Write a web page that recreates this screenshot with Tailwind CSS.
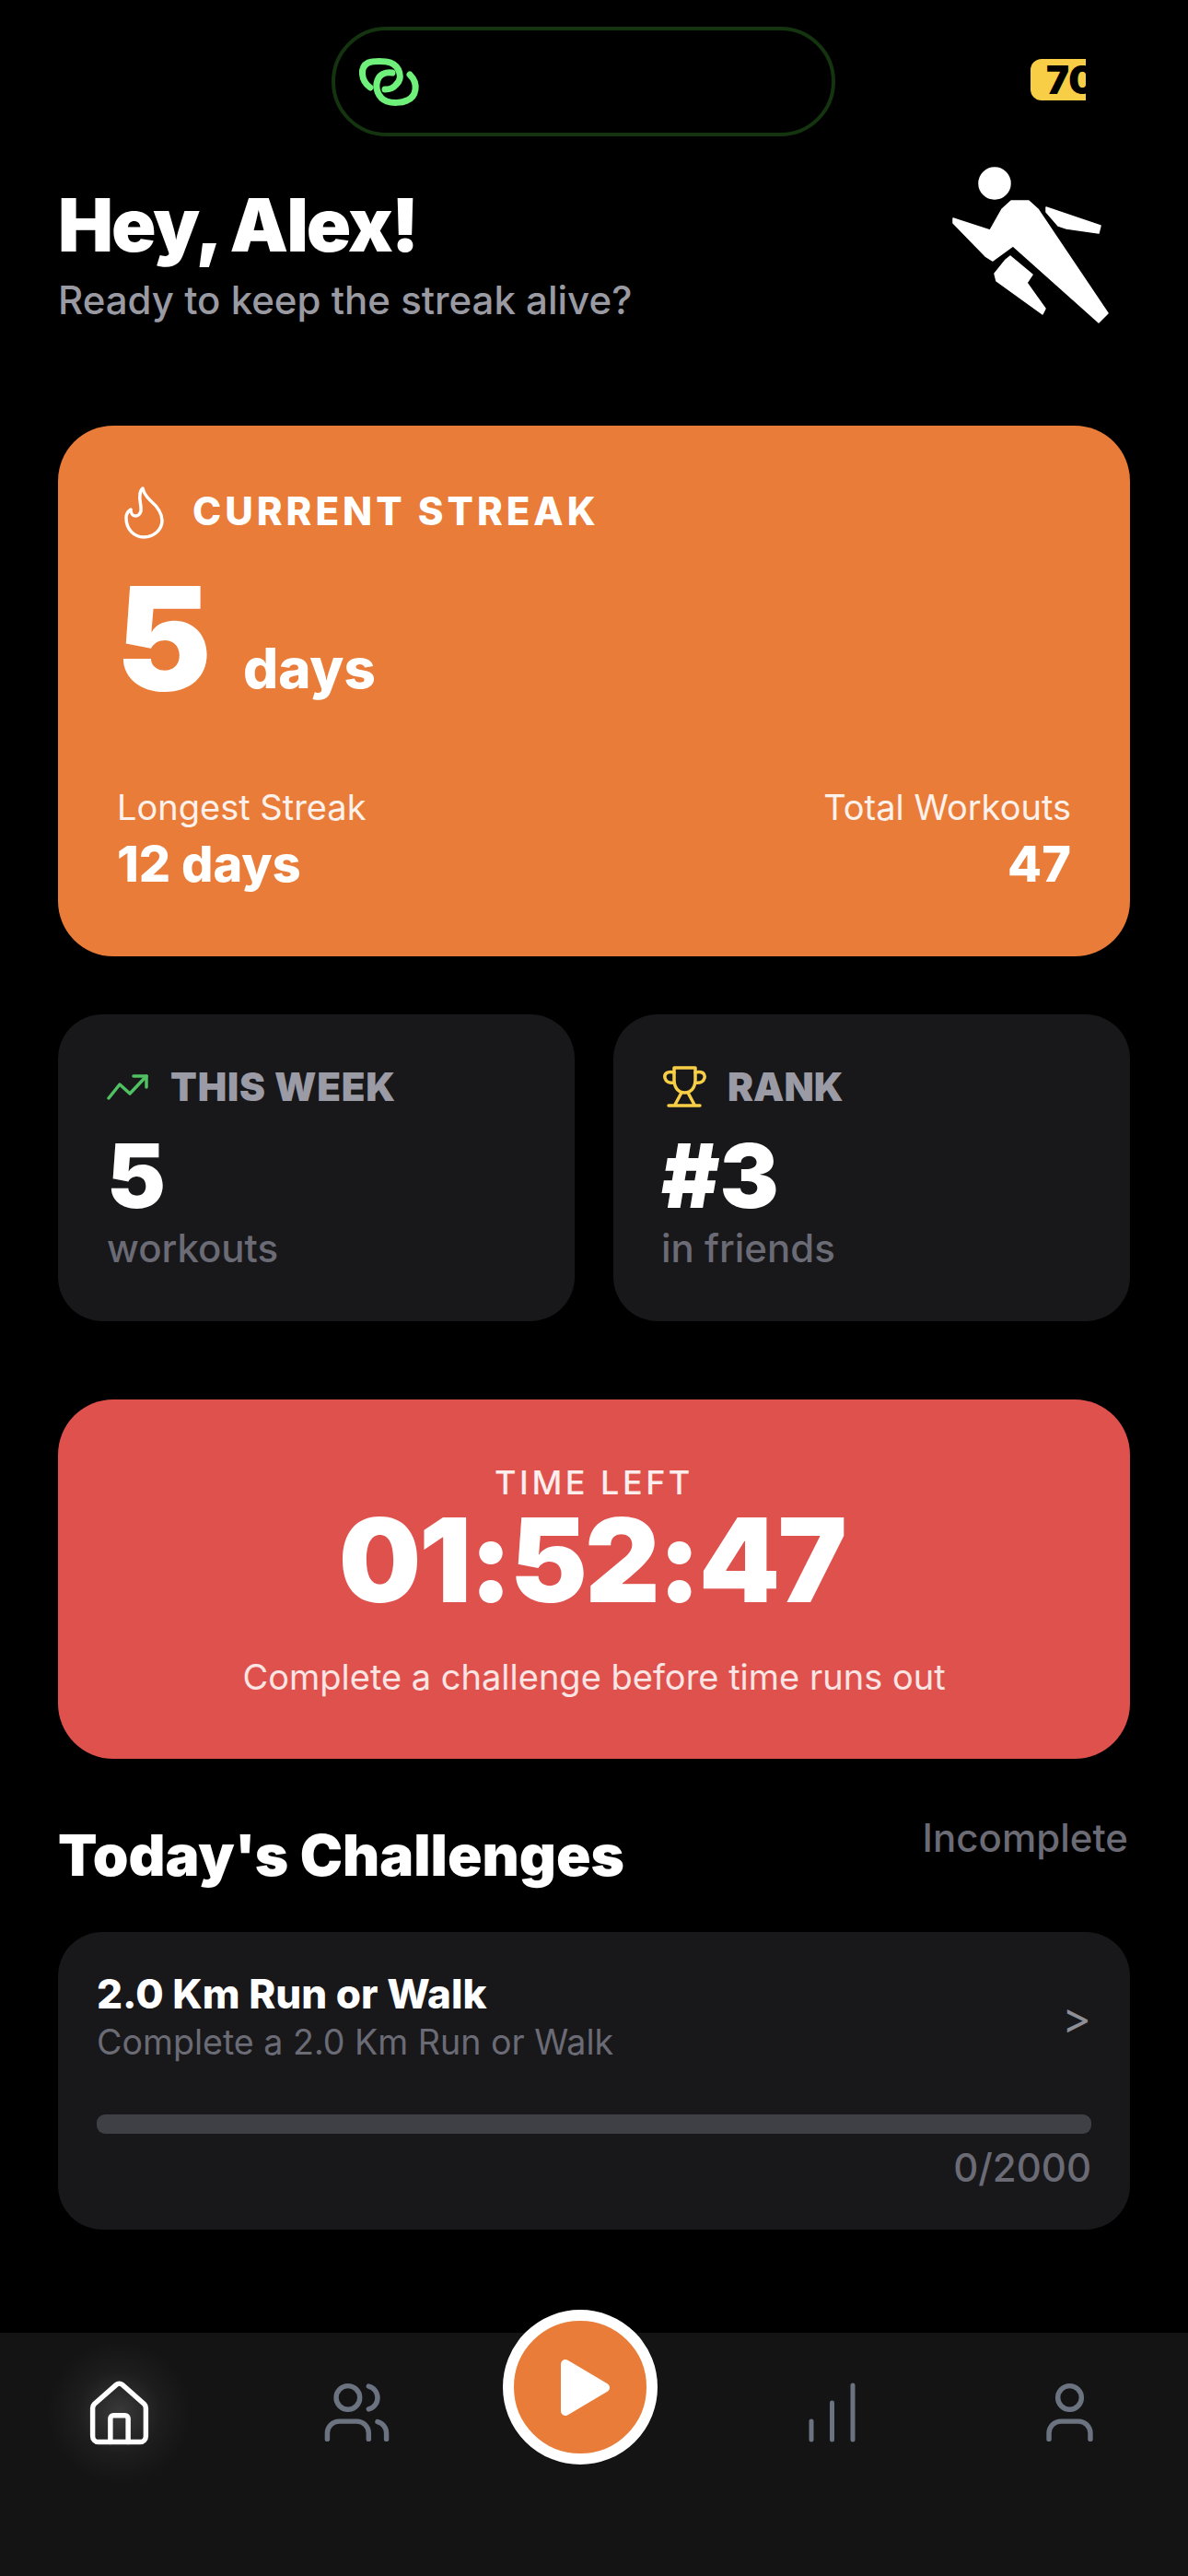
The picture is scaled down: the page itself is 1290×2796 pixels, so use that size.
<!DOCTYPE html>
<html lang="en">
<head>
  <meta charset="UTF-8" />
  <meta name="viewport" content="width=device-width, initial-scale=1" />
  <title>Streak</title>
  <script src="https://cdn.jsdelivr.net/npm/@tailwindcss/browser@4"></script>
</head>
<body class="bg-black">
  <div class="relative w-[1290px] h-[2796px] overflow-hidden bg-black text-white font-['Inter',sans-serif]">

    <!-- status area -->
    <div class="relative h-[182px]">
      <div class="absolute left-[360px] top-[29px] w-[547px] h-[119px] rounded-[60px] border-[4px] border-[#14330f] flex items-center pl-[16px]">
        <svg class="w-[90px] h-[70px] mt-[3px]" viewBox="0 0 90 70" fill="none" stroke="#6ef07a" stroke-width="7" stroke-linecap="round">
          <path d="M22 40C12 33 10 18 20 13C25 11 38 11 44 13C54 17 58 30 50 37C47 41 42 42 38 42"/>
          <path d="M46 24C38 23 32 26 30 32C27 40 30 51 40 55C46 57 56 57 62 54C72 50 75 36 65 26"/>
        </svg>
      </div>
      <div class="absolute left-[1119px] top-[64px] w-[60px] h-[45px] rounded-l-[12px] bg-[#f7ce46] overflow-hidden whitespace-nowrap pl-[17px] text-black font-black text-[42px] leading-[45px]">70</div>
    </div>

    <!-- header -->
    <div class="relative px-[63px] h-[280px] pt-[18px]">
      <h1 class="text-[80px] leading-[88px] font-black tracking-[-2px]">Hey, Alex!</h1>
      <p class="text-[42px] leading-[52px] font-medium mt-[12px] text-[#9a9aa3]">Ready to keep the streak alive?</p>
      <svg class="absolute left-[1020px] -top-[12px] w-[200px] h-[190px]" viewBox="0 0 200 190" fill="#fff" stroke="#fff" stroke-width="1.5" stroke-linejoin="round">
        <circle cx="60" cy="29" r="17"/>
        <path d="M15 67L55 80L68 57L78 48H97L107 57L183 170L173 180L80 97L58 113L50 108L15 72Z"/>
        <path d="M116 55L175 75L173 83L138 78L129 75L116 60Z"/>
        <path d="M77 108L101 128L95 137L115 165L112 171L62 135L60 127L72 112Z"/>
      </svg>
    </div>

    <!-- streak card -->
    <section class="mx-[63px] h-[576px] rounded-[60px] bg-[#e97c38] px-[64px] pt-[58px]">
      <div class="flex items-center gap-[19px] -ml-[7px]">
        <svg class="w-[70px] h-[70px]" viewBox="0 0 70 70" fill="none" stroke="#fff" stroke-width="3.5" stroke-linecap="round" stroke-linejoin="round">
          <path d="M17 42C17 38 19 35 22 33C22 37 24 40 27 40C31 40 34 36 33 31C33 27 31 23 32 17C32 14 33 12 35 10C36 15 39 19 43 23C50 29 56 37 56 45C56 55 47 63 36 63C26 63 17 55 17 42Z"/>
        </svg>
        <span class="text-[42px] leading-[50px] font-extrabold tracking-[4px]">CURRENT STREAK</span>
      </div>
      <div class="flex items-end mt-[25px] -ml-[1px]">
        <span class="text-[156px] leading-[156px] font-black">5</span>
        <span class="text-[60px] leading-[72px] font-extrabold ml-[34px] mb-[10px]">days</span>
      </div>
      <div class="flex justify-between mt-[83px]">
        <div>
          <p class="text-[38px] leading-[44px] text-white/90">Longest Streak</p>
          <p class="text-[54px] leading-[60px] font-extrabold mt-[10px]">12 days</p>
        </div>
        <div class="text-right">
          <p class="text-[38px] leading-[44px] text-white/90">Total Workouts</p>
          <p class="text-[54px] leading-[60px] font-extrabold mt-[10px]">47</p>
        </div>
      </div>
    </section>

    <!-- stats -->
    <div class="mx-[63px] mt-[63px] grid grid-cols-2 gap-[42px]">
      <div class="h-[333px] rounded-[48px] bg-[#18181b] px-[53px] pt-[44px]">
        <div class="flex items-center gap-[23px] h-[70px]">
          <svg class="w-[46px] h-[30px]" viewBox="0 0 46 30" fill="none" stroke="#4fc163" stroke-width="3.5" stroke-linecap="round" stroke-linejoin="round">
            <path d="M2 27L14 12L25 22L43 3"/>
            <path d="M29 3H43V15"/>
          </svg>
          <span class="text-[42px] leading-[50px] font-black tracking-[0.8px] text-[#9b9ba5]">THIS WEEK</span>
        </div>
        <p class="text-[96px] leading-[100px] font-black mt-[11px]">5</p>
        <p class="text-[42px] leading-[52px] font-medium mt-[3px] text-[#6b6b75]">workouts</p>
      </div>
      <div class="h-[333px] rounded-[48px] bg-[#18181b] px-[52px] pt-[44px]">
        <div class="flex items-center gap-[10px] h-[70px] -ml-[8px]">
          <svg class="w-[70px] h-[70px]" viewBox="0 0 70 70" fill="none" stroke="#f7ce46" stroke-width="3.5" stroke-linecap="round" stroke-linejoin="round">
            <path d="M22 14H45V27C45 36 40 41 33.5 41C27 41 22 36 22 27Z"/>
            <path d="M22 19C14 17 11 21 12 25C13 29 17 31 22 30"/>
            <path d="M45 19C53 17 56 21 55 25C54 29 50 31 45 30"/>
            <path d="M30 41L23 54M37 41L44 54M16 55H50"/>
          </svg>
          <span class="text-[42px] leading-[50px] font-black text-[#9b9ba5]">RANK</span>
        </div>
        <p class="text-[96px] leading-[100px] font-black mt-[11px]">#3</p>
        <p class="text-[42px] leading-[52px] font-medium mt-[3px] text-[#6b6b75]">in friends</p>
      </div>
    </div>

    <!-- countdown -->
    <section class="mx-[63px] mt-[85px] h-[390px] rounded-[60px] bg-[#de514c] flex flex-col items-center pt-[68px]">
      <p class="text-[36px] leading-[44px] font-medium tracking-[3.5px] text-white/90">TIME LEFT</p>
      <p class="text-[126px] leading-[124px] font-black tracking-[-2.5px] -ml-[5px]">01:52:47</p>
      <p class="text-[38px] leading-[46px] text-white/85 mt-[42px]">Complete a challenge before time runs out</p>
    </section>

    <!-- challenges -->
    <div class="ml-[63px] mr-[65px] mt-[60px] flex justify-between items-start">
      <h2 class="text-[62px] leading-[72px] font-black pt-[9px]">Today's Challenges</h2>
      <span class="text-[42px] leading-[52px] font-medium text-[#6b6b75]">Incomplete</span>
    </div>
    <section class="mx-[63px] mt-[47px] h-[323px] rounded-[48px] bg-[#18181b] px-[42px] pt-[41px]">
      <div class="flex justify-between items-center">
        <div>
          <p class="text-[44px] leading-[52px] font-extrabold">2.0 Km Run or Walk</p>
          <p class="text-[37.6px] leading-[50px] mt-[2px] text-[#6b6b75]">Complete a 2.0 Km Run or Walk</p>
        </div>
        <span class="text-[48px] text-[#8e8e96]">&gt;</span>
      </div>
      <div class="mt-[53px] h-[21px] rounded-[9px] bg-[#3f3f46]"></div>
      <p class="text-right text-[42px] leading-[52px] font-medium text-[#6b6b75] mt-[11px]">0/2000</p>
    </section>

    <!-- bottom nav -->
    <nav class="absolute left-0 bottom-0 w-full h-[264px] bg-[#141414] grid grid-cols-5 justify-items-center items-start pt-[48px]">
      <div class="relative w-[77px] h-[77px]">
        <div class="absolute -inset-[60px] rounded-full bg-[radial-gradient(circle,rgba(255,255,255,0.16),rgba(255,255,255,0.04)_32%,transparent_56%)]"></div>
        <svg class="relative w-[77px] h-[77px]" viewBox="0 0 24 24" fill="none" stroke="#fff" stroke-width="1.7" stroke-linecap="round" stroke-linejoin="round">
          <path d="M3 10.5a2 2 0 0 1 .6-1.4L11 2.6a1.5 1.5 0 0 1 2 0l7.4 6.5a2 2 0 0 1 .6 1.4V20a2 2 0 0 1-2 2H5a2 2 0 0 1-2-2z"/>
          <path d="M9 22v-8a1 1 0 0 1 1-1h4a1 1 0 0 1 1 1v8"/>
        </svg>
      </div>
      <svg class="w-[77px] h-[77px]" viewBox="0 0 24 24" fill="none" stroke="#6b7280" stroke-width="1.7" stroke-linecap="round" stroke-linejoin="round">
        <path d="M16 21v-2a4 4 0 0 0-4-4H6a4 4 0 0 0-4 4v2"/>
        <circle cx="9" cy="7" r="4"/>
        <path d="M22 21v-2a4 4 0 0 0-3-3.87"/>
        <path d="M16 3.13a4 4 0 0 1 0 7.75"/>
      </svg>
      <div class="-mt-[73px] -translate-x-[15px] w-[168px] h-[168px] rounded-full bg-[#e97c38] border-[12px] border-white flex items-center justify-center">
        <svg class="w-[53px] h-[61px] ml-[11px]" viewBox="0 0 53 61" fill="#fff" stroke="#fff" stroke-width="10" stroke-linejoin="round">
          <path d="M5 5L48 30.5L5 56Z"/>
        </svg>
      </div>
      <svg class="w-[77px] h-[77px]" viewBox="0 0 77 77" fill="none" stroke="#6b7280" stroke-width="5" stroke-linecap="round">
        <path d="M16 48V68M38.5 28V68M61 9V68"/>
      </svg>
      <svg class="w-[77px] h-[77px]" viewBox="0 0 24 24" fill="none" stroke="#6b7280" stroke-width="1.7" stroke-linecap="round" stroke-linejoin="round">
        <path d="M19 21v-2a4 4 0 0 0-4-4H9a4 4 0 0 0-4 4v2"/>
        <circle cx="12" cy="7" r="4"/>
      </svg>
    </nav>
  </div>
</body>
</html>
